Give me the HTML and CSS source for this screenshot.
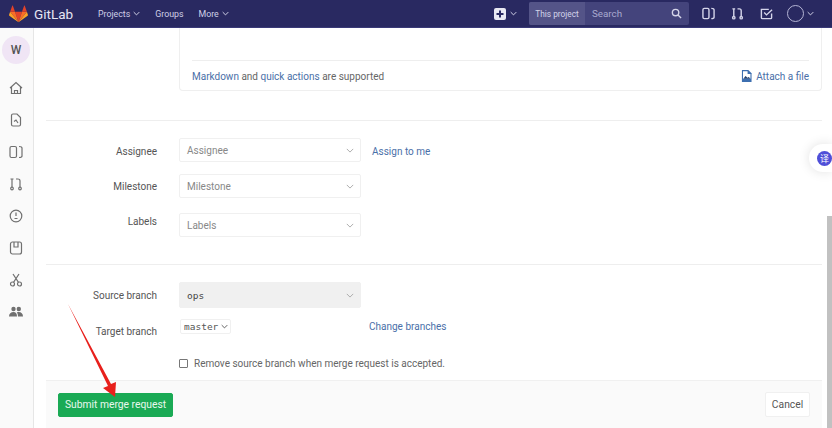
FILE: index.html
```html
<!DOCTYPE html>
<html lang="en">
<head>
    <meta charset="UTF-8">
    <title>New merge request · GitLab</title>
    <link rel="stylesheet" href="styles.css">
</head>
<body>
    <header class="navbar">
        <a class="brand">
            <svg class="logo" viewBox="0 0 24 22" width="19" height="18">
                <path fill="#e24329" d="M12 21.5 16.4 8H7.6z"/>
                <path fill="#fc6d26" d="M12 21.5 7.6 8H1.4z"/>
                <path fill="#fca326" d="M1.4 8 .1 12.1c-.1.4 0 .8.3 1L12 21.5z"/>
                <path fill="#e24329" d="M1.4 8h6.2L4.9.6c-.1-.4-.7-.4-.8 0z"/>
                <path fill="#fc6d26" d="M12 21.5 16.4 8h6.2z"/>
                <path fill="#fca326" d="m22.6 8 1.3 4.1c.1.4 0 .8-.3 1L12 21.5z"/>
                <path fill="#e24329" d="M22.6 8h-6.2L19.1.6c.1-.4.7-.4.8 0z"/>
            </svg>
            <span class="brand-name">GitLab</span>
        </a>
        <nav class="nav-links">
            <a>Projects <svg class="caret" viewBox="0 0 10 6"><path d="M1 1l4 4 4-4"/></svg></a>
            <a>Groups</a>
            <a>More <svg class="caret" viewBox="0 0 10 6"><path d="M1 1l4 4 4-4"/></svg></a>
        </nav>
        <div class="nav-right">
            <div class="new-menu">
                <svg class="plus" viewBox="0 0 12 12" width="12" height="12"><rect width="12" height="12" rx="2" fill="#e8e8f2"/><path d="M6 2.5v7M2.5 6h7" stroke="#292961" stroke-width="2"/></svg>
                <svg class="caret" viewBox="0 0 10 6"><path d="M1 1l4 4 4-4"/></svg>
            </div>
            <div class="search">
                <span class="search-scope">This project</span>
                <span class="search-input">Search</span>
                <svg viewBox="0 0 12 12" width="11" height="11" class="search-icon"><circle cx="5" cy="5" r="3.5"/><path d="M7.6 7.6 11 11"/></svg>
            </div>
            <svg class="nav-icon" viewBox="0 0 14 14" width="13" height="13"><rect x="1" y="1.5" width="6.5" height="11" rx="1.5"/><path d="M10 1.5c2 0 3 .5 3 1.5v8c0 1-1 1.5-3 1.5"/></svg>
            <svg class="nav-icon" viewBox="0 0 14 14" width="13" height="13"><circle cx="3" cy="11.5" r="1.3"/><circle cx="11" cy="11.5" r="1.3"/><path d="M3 10V2M1.5 2h3M11 10V4c0-1.5-1-2-2-2H7"/></svg>
            <svg class="nav-icon" viewBox="0 0 14 14" width="13" height="13"><path d="M12.5 7v4.5a1 1 0 0 1-1 1h-9a1 1 0 0 1-1-1V2.500h8M4.500 6l2.500 2.500L13 3"/></svg>
            <div class="avatar-menu">
                <span class="user-avatar"></span>
                <svg class="caret" viewBox="0 0 10 6"><path d="M1 1l4 4 4-4"/></svg>
            </div>
        </div>
    </header>

    <div class="page">
        <aside class="sidebar">
            <span class="project-avatar">W</span>
            <svg class="side-icon" viewBox="0 0 14 14"><path d="M1 7 7 1.5 13 7M2.5 6v6.500h9V6M5.500 12.500V9.500h3v3"/></svg>
            <svg class="side-icon" viewBox="0 0 14 14"><path d="M2.5 2.500a1.500 1.500 0 0 1 1.500-1.500h4l3.500 3.500v7a1.500 1.500 0 0 1-1.500 1.500H4a1.500 1.500 0 0 1-1.500-1.500z"/><path d="M5 8.500 7 7l2 3"/></svg>
            <svg class="side-icon" viewBox="0 0 14 14"><rect x="1" y="1.5" width="6.5" height="11" rx="1.5"/><path d="M10 1.5c2 0 3 .5 3 1.5v8c0 1-1 1.5-3 1.5"/></svg>
            <svg class="side-icon" viewBox="0 0 14 14"><circle cx="3" cy="11.5" r="1.3"/><circle cx="11" cy="11.5" r="1.3"/><path d="M3 10V2M1.5 2h3M11 10V4c0-1.5-1-2-2-2H7"/></svg>
            <svg class="side-icon" viewBox="0 0 14 14"><circle cx="7" cy="7" r="5.8"/><path d="M7 3.500V7M5.500 9.500h3"/></svg>
            <svg class="side-icon" viewBox="0 0 14 14"><rect x="1.5" y="1" width="11" height="12" rx="2"/><path d="M5 1v5h4V1"/></svg>
            <svg class="side-icon" viewBox="0 0 14 14"><circle cx="3.5" cy="11" r="2"/><circle cx="10.5" cy="11" r="2"/><path d="M4.500 9.300 10 1M9.500 9.300 4 1"/></svg>
            <svg class="side-icon side-icon-solid" viewBox="0 0 14 14"><circle cx="4.5" cy="4" r="2.2"/><circle cx="9.8" cy="4" r="2.2"/><path d="M0 11.500c0-3 2-4.500 4.500-4.500S8 8.500 8 11.500zM9 11.500c0-1.500-.3-3-1.200-4 .6-.4 1.300-.5 2-.5 2.400 0 4.200 1.500 4.200 4.500z"/></svg>
        </aside>

        <main class="content">
            <section class="editor-card">
                <div class="editor-foot">
                    <span><a>Markdown</a> and <a>quick actions</a> are supported</span>
                    <a class="attach">
                        <svg viewBox="0 0 12 13" width="11" height="12"><path fill="#3d6fb0" d="M1 0h7l3.500 3.500V13H1z"/><path fill="#fff" d="M2.200 1.200h5v3h3.100v5.300H2.200z"/><path fill="#1f3f70" d="M2.500 9.500l2.500-3 2 2 1.500-1 1.800 2z"/></svg>
                        Attach a file
                    </a>
                </div>
            </section>

            <hr class="divider divider-first">

            <div class="form-row row-assignee">
                <label>Assignee</label>
                <div class="select">Assignee<svg class="chev" viewBox="0 0 10 6"><path d="M1 1l4 4 4-4"/></svg></div>
                <a class="row-link">Assign to me</a>
            </div>
            <div class="form-row row-milestone">
                <label>Milestone</label>
                <div class="select">Milestone<svg class="chev" viewBox="0 0 10 6"><path d="M1 1l4 4 4-4"/></svg></div>
            </div>
            <div class="form-row row-labels">
                <label>Labels</label>
                <div class="select select-low">Labels<svg class="chev" viewBox="0 0 10 6"><path d="M1 1l4 4 4-4"/></svg></div>
            </div>

            <hr class="divider divider-second">

            <div class="form-row row-source">
                <label>Source branch</label>
                <div class="select select-branch">ops<svg class="chev" viewBox="0 0 10 6"><path d="M1 1l4 4 4-4"/></svg></div>
            </div>
            <div class="form-row row-target">
                <label>Target branch</label>
                <div class="mini-select">master<svg class="chev-dark" viewBox="0 0 10 6"><path d="M1 1l4 4 4-4"/></svg></div>
                <a class="change-link">Change branches</a>
            </div>
            <div class="form-row row-check">
                <span class="check-box"></span>
                <span class="check-label">Remove source branch when merge request is accepted.</span>
            </div>

            <footer class="form-actions">
                <button class="btn-submit">Submit merge request</button>
                <button class="btn-cancel">Cancel</button>
            </footer>
        </main>

        <div class="scroll-track"><div class="scroll-thumb"></div></div>
    </div>

    <div class="float-tab"><span class="float-dot">译</span></div>

    <svg class="arrow" viewBox="0 0 832 428" width="832" height="428">
        <path fill="#e8201c" d="M68 304 108 386 103 388 115 397 116 382 111 384z"/>
    </svg>
</body>
</html>
```

FILE: styles.css
```css
* {
    box-sizing: border-box;
}

html, body {
    height: 100%;
}

body {
    margin: 0;
    overflow: hidden;
    background: #fff;
    color: #555;
    font-family: Roboto, "Noto Sans", "Liberation Sans", sans-serif;
    font-size: 10px;
}

a {
    color: #4a6fa8;
    text-decoration: none;
}

/* top bar */
.navbar {
    display: flex;
    align-items: center;
    height: 28px;
    padding: 0 0 0 9px;
    background: #292961;
    border-bottom: 1px solid #3a3a78;
    color: #d5d5ea;
}

.brand {
    display: flex;
    align-items: center;
    gap: 6px;
    width: 89px;
}

.brand-name {
    color: #e6e6f2;
    font-size: 13.5px;
}

.nav-links {
    display: flex;
    gap: 15px;
    font-size: 8.8px;
}

.nav-links a {
    color: #cfcfe6;
    display: flex;
    align-items: center;
    gap: 3px;
}

.caret {
    width: 7px;
    height: 5px;
    fill: none;
    stroke: #d5d5ea;
    stroke-width: 1.4;
}

.nav-right {
    display: flex;
    align-items: center;
    margin-left: auto;
}

.new-menu {
    display: flex;
    align-items: center;
    gap: 4px;
    margin-right: 12px;
}

.search {
    display: flex;
    align-items: center;
    width: 160px;
    height: 23px;
    border-radius: 2px;
    background: #44447c;
    margin-right: 5px;
}

.search-scope {
    display: flex;
    align-items: center;
    justify-content: center;
    width: 56px;
    height: 100%;
    background: #545488;
    border-radius: 2px 0 0 2px;
    color: #d5d5ea;
    font-size: 8.3px;
}

.search-input {
    padding-left: 7px;
    color: #a9a9cf;
    font-size: 9.8px;
}

.search-icon {
    margin-left: auto;
    margin-right: 7px;
    fill: none;
    stroke: #d5d5ea;
    stroke-width: 1.5;
}

.nav-icon {
    margin: 0 8px;
    fill: none;
    stroke: #d5d5ea;
    stroke-width: 1.5;
}

.avatar-menu {
    display: flex;
    align-items: center;
    gap: 3px;
    margin-left: 6px;
    margin-right: 18px;
}

.user-avatar {
    width: 17px;
    height: 17px;
    border: 1px solid #b5b5d5;
    border-radius: 50%;
}

/* page body */
.page {
    display: flex;
    height: 400px;
}

.sidebar {
    display: flex;
    flex-direction: column;
    align-items: center;
    flex: none;
    gap: 18px;
    width: 34px;
    padding: 8px 4px 0 0;
    background: #fafafa;
    border-right: 1px solid #e6e6e6;
}

.project-avatar {
    display: flex;
    align-items: center;
    justify-content: center;
    flex: none;
    width: 28px;
    height: 28px;
    margin: 0 0 -1px 3px;
    border-radius: 50%;
    background: #f0e5f5;
    color: #555;
    font-size: 12px;
    font-weight: 500;
}

.side-icon {
    flex: none;
    width: 14px;
    height: 14px;
    margin-left: 3px;
    fill: none;
    stroke: #707070;
    stroke-width: 1.2;
}

.side-icon-solid {
    fill: #707070;
    stroke: none;
}

.content {
    position: relative;
    flex: 1;
    padding: 0 5px 0 12px;
    display: flex;
    flex-direction: column;
}

.editor-card {
    height: 63px;
    margin-left: 133px;
    padding: 32px 12px 0;
    border: 1px solid #efefef;
    border-top: 0;
    border-radius: 0 0 4px 4px;
}

.editor-foot {
    display: flex;
    justify-content: space-between;
    align-items: center;
    height: 31px;
    border-top: 1px solid #eee;
    color: #666;
}

.attach {
    display: flex;
    align-items: center;
    gap: 4px;
}

.divider {
    flex: none;
    width: 100%;
    height: 1px;
    margin: 0;
    border: 0;
    background: #eee;
}

.divider-first {
    margin-top: 29px;
}

.divider-second {
    margin-top: 27px;
}

.form-row {
    display: flex;
    align-items: flex-start;
}

.form-row label {
    flex: none;
    width: 111px;
    margin-right: 22px;
    text-align: right;
    color: #555;
    line-height: 16px;
}

.row-assignee {
    margin-top: 17px;
}

.row-assignee label {
    padding-top: 6px;
}

.row-milestone {
    margin-top: 12px;
}

.row-milestone label {
    padding-top: 5px;
}

.row-labels {
    margin-top: 15px;
}

.row-labels label {
    padding-top: 1px;
}

.row-source {
    margin-top: 17px;
}

.row-source label {
    padding-top: 6px;
}

.row-target {
    margin-top: 11px;
}

.row-target label {
    padding-top: 5px;
}

.select {
    display: flex;
    align-items: center;
    justify-content: space-between;
    flex: none;
    width: 182px;
    height: 24px;
    padding: 0 6px 0 7px;
    border: 1px solid #f0f0f0;
    border-radius: 2px;
    color: #888;
}

.select-low {
    padding-top: 1px;
}

.select-branch {
    height: 26px;
    background: #f0f0f0;
    color: #444;
    font-family: "DejaVu Sans Mono", "Liberation Mono", monospace;
    font-size: 9.5px;
}

.chev {
    width: 8px;
    height: 5px;
    fill: none;
    stroke: #aaa;
    stroke-width: 1.2;
}

.chev-dark {
    width: 7px;
    height: 5px;
    margin-left: 3px;
    fill: none;
    stroke: #555;
    stroke-width: 1.3;
}

.row-link {
    margin-left: 11px;
    padding-top: 6px;
    line-height: 16px;
}

.mini-select {
    display: flex;
    align-items: center;
    flex: none;
    width: 51px;
    height: 15px;
    margin-left: 1px;
    padding-left: 3px;
    border: 1px solid #f0f0f0;
    border-radius: 2px;
    color: #555;
    font-family: "DejaVu Sans Mono", "Liberation Mono", monospace;
    font-size: 9.5px;
}

.change-link {
    margin-left: 138px;
    line-height: 15px;
}

.row-check {
    align-items: center;
    margin-top: 15px;
    margin-left: 133px;
    height: 16px;
}

.check-box {
    width: 9px;
    height: 9px;
    border: 1px solid #777;
    border-radius: 1px;
}

.check-label {
    margin-left: 6px;
    color: #666;
}

.form-actions {
    display: flex;
    justify-content: space-between;
    align-items: center;
    margin-top: 9px;
    height: 48px;
    padding: 0 12px;
    background: #fafafa;
    border-top: 1px solid #f0f0f0;
}

.btn-submit {
    width: 115px;
    height: 24px;
    padding: 0;
    border: 1px solid #1aaa55;
    border-radius: 2px;
    background: #1aaa55;
    color: #e8f8ee;
    font-family: inherit;
    font-size: 10.3px;
    white-space: nowrap;
}

.btn-cancel {
    width: 45px;
    height: 25px;
    padding: 0;
    border: 1px solid #f0f0f0;
    border-radius: 2px;
    background: #fff;
    color: #555;
    font-family: inherit;
    font-size: 10.3px;
}

.scroll-track {
    display: flex;
    flex: none;
    align-items: flex-end;
    width: 5px;
}

.scroll-thumb {
    width: 100%;
    height: 212px;
    background: #c1c1c1;
}

/* overlays */
.float-tab {
    position: absolute;
    top: 144px;
    right: 0;
    display: flex;
    align-items: center;
    width: 23px;
    height: 28px;
    padding-left: 8px;
    background: #fff;
    border-radius: 14px 0 0 14px;
    box-shadow: 0 0 12px rgba(0, 0, 0, 0.12);
}

.float-dot {
    display: flex;
    align-items: center;
    justify-content: center;
    width: 15px;
    height: 15px;
    border-radius: 50%;
    background: #4f4fd8;
    color: #fff;
    font-family: "Noto Sans CJK SC", sans-serif;
    font-size: 9px;
}

.arrow {
    position: absolute;
    top: 0;
    left: 0;
    pointer-events: none;
}
```
